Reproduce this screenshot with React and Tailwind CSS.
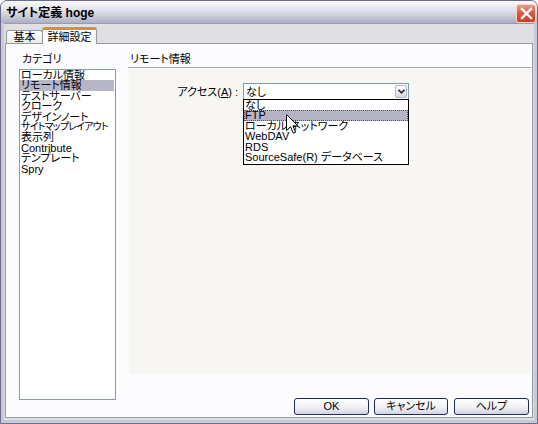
import React from 'react';

const categories = [
  'ローカル情報',
  'リモート情報',
  'テストサーバー',
  'クローク',
  'デザインノート',
  'サイトマップレイアウト',
  '表示列',
  'Contribute',
  'テンプレート',
  'Spry',
];

const accessOptions = ['なし', 'FTP', 'ローカル/ネットワーク', 'WebDAV', 'RDS', 'SourceSafe(R) データベース'];

function XpButton({ children, width }) {
  return (
    <button
      className={`${width} h-[17px] rounded-[3px] border border-[#1c2a66] bg-gradient-to-b from-white via-[#f3f3f7] to-[#d3d4e0] text-[11px] leading-[15px] text-black`}
    >
      {children}
    </button>
  );
}

export default function App() {
  return (
    <div
      className="relative w-[538px] h-[424px] flex flex-col overflow-hidden rounded-t-[7px] border border-[#6b6b8a] bg-[#c9c9d9] text-black [font-feature-settings:'palt']"
      style={{ fontFamily: '"Liberation Sans", "Noto Sans CJK JP", sans-serif' }}
    >
      {/* Title bar */}
      <div className="h-[22px] flex items-center justify-between pl-[5px] pr-[1px] bg-gradient-to-b from-[#fbfbfc] via-[#dcdce6] to-[#aeaec4]">
        <span className="text-[12px] font-bold leading-[14px] pt-[1px]">サイト定義 hoge</span>
        <div className="w-[20px] h-[19px] mt-[2px] rounded-[3px] border border-[#f4d6cc] bg-gradient-to-b from-[#eb9a82] via-[#d9573b] to-[#c23f25] flex items-center justify-center">
          <svg width="13" height="13" viewBox="0 0 13 13">
            <path d="M2 2 L11 11 M11 2 L2 11" stroke="white" strokeWidth="2.4" strokeLinecap="square" />
          </svg>
        </div>
      </div>

      {/* Client area */}
      <div className="flex-1 mx-[3px] mb-[3px] flex flex-col bg-[#e0dfe3] border-t border-[#9a9ab2]">
        {/* Tabs */}
        <div className="h-[19px] flex items-end pl-[2px] text-[11px]">
          <div className="w-[37px] h-[13px] rounded-t-[3px] border border-b-0 border-[#919b9c] bg-gradient-to-b from-white to-[#ecebe6] flex items-center justify-center leading-[12px]">
            基本
          </div>
          <div className="relative z-10 -ml-[1px] -mb-[1px] w-[55px] h-[17px] rounded-t-[3px] border-x border-[#919b9c] border-t-[3px] border-t-[#e68b2c] bg-[#fcfcfe] flex items-center justify-center leading-[12px]">
            詳細設定
          </div>
        </div>

        {/* Tab panel */}
        <div className="flex-1 mx-[1px] mb-[2px] flex border border-[#919b9c] bg-[#fcfcfe] text-[11px]">
          {/* Category list */}
          <div className="pl-[13px] pt-[9px]">
            <div className="h-[12px] leading-[12px] pl-[3px] mb-[4px]">カテゴリ</div>
            <div className="w-[97px] h-[331px] border border-[#7f9db9] bg-white overflow-hidden">
              {categories.map((c, i) => (
                <div
                  key={c}
                  className={`h-[10.4px] leading-[10.4px] pl-[1px] mr-[1px] whitespace-nowrap ${i === 1 ? 'bg-[#b6b6c6]' : ''} ${i === 5 ? 'text-[10px] tracking-[-0.8px]' : ''}`}
                >
                  {c}
                </div>
              ))}
            </div>
          </div>

          {/* Right side */}
          <div className="flex-1 ml-[12px] mr-[1px] pt-[9px] flex flex-col">
            <div className="h-[12px] leading-[12px] pl-[2px]">リモート情報</div>
            <div className="mt-[2px] h-[1px] bg-[#a7a6aa]" />
            <div className="relative ml-[1px] mt-[1px] h-[305px] bg-[#f7f6f2]">
              <div className="flex items-center pt-[14px]">
                <div className="w-[109px] text-right leading-[12px] whitespace-nowrap">
                  アクセス(<u>A</u>) :
                </div>
                <div className="ml-[5px] w-[166px] h-[17px] border border-[#7f9db9] bg-white flex items-center justify-between">
                  <span className="pl-[2px] leading-[12px]">なし</span>
                  <div className="w-[12px] h-[13px] mr-[1px] rounded-[2px] border border-[#b4b4c8] bg-gradient-to-b from-white to-[#d8d8e4] flex items-center justify-center">
                    <svg width="7" height="5" viewBox="0 0 7 5">
                      <path d="M0.5 0.8 L3.5 3.8 L6.5 0.8" fill="none" stroke="#2a2a40" strokeWidth="1.6" />
                    </svg>
                  </div>
                </div>
              </div>

              {/* Open dropdown */}
              <div className="absolute left-[114px] top-[30px] w-[166px] h-[66px] border border-black bg-white z-20">
                {accessOptions.map((o, i) => (
                  <div
                    key={o}
                    className={`h-[10.4px] leading-[10.4px] pl-[1px] whitespace-nowrap ${i === 1 ? 'bg-[#b4b4c4] outline-1 outline-dotted outline-[#555] -outline-offset-1' : ''}`}
                  >
                    {o}
                  </div>
                ))}
              </div>
            </div>

            <div className="mt-auto mb-[2px] pr-[2px] flex justify-end gap-[5px]">
              <XpButton width="w-[75px]">OK</XpButton>
              <XpButton width="w-[74px] mr-[1px]">キャンセル</XpButton>
              <XpButton width="w-[75px]">ヘルプ</XpButton>
            </div>
          </div>
        </div>
      </div>

      {/* Mouse pointer */}
      <svg className="absolute left-[285px] top-[113px] z-30" width="13" height="21" viewBox="0 0 13 21">
        <path
          d="M0.5 0.5 L0.5 16.5 L4.5 12.7 L7.3 19.2 L9.6 18.2 L6.9 11.9 L12 11.9 Z"
          fill="white"
          stroke="black"
          strokeWidth="1"
          strokeLinejoin="miter"
        />
      </svg>
    </div>
  );
}
